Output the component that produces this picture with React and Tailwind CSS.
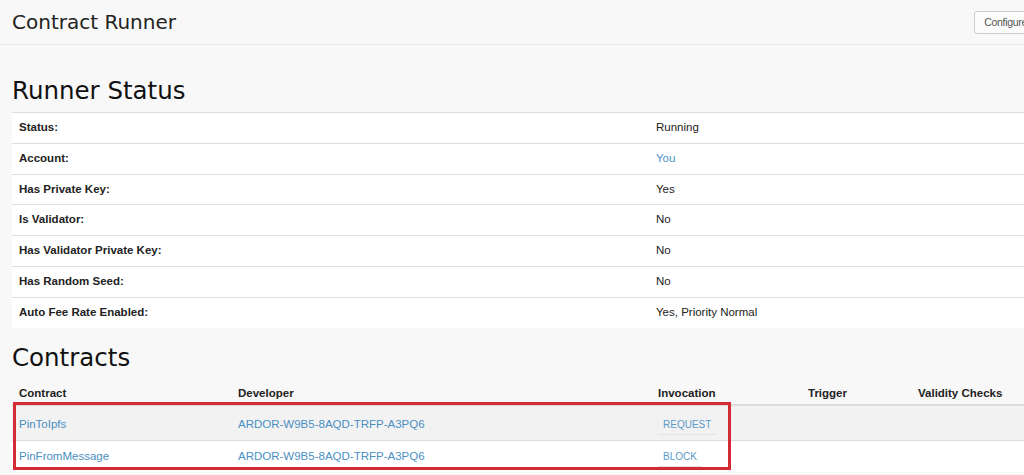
import React from 'react';

const status = [
  { label: 'Status:', value: 'Running' },
  { label: 'Account:', value: 'You', link: true },
  { label: 'Has Private Key:', value: 'Yes' },
  { label: 'Is Validator:', value: 'No' },
  { label: 'Has Validator Private Key:', value: 'No' },
  { label: 'Has Random Seed:', value: 'No' },
  { label: 'Auto Fee Rate Enabled:', value: 'Yes, Priority Normal' },
];

const contracts = [
  { name: 'PinToIpfs', developer: 'ARDOR-W9B5-8AQD-TRFP-A3PQ6', invocation: 'REQUEST', striped: true },
  { name: 'PinFromMessage', developer: 'ARDOR-W9B5-8AQD-TRFP-A3PQ6', invocation: 'BLOCK', striped: false },
];

const heading = { fontFamily: '"DejaVu Sans", Verdana, sans-serif' };

export default function App() {
  return (
    <div
      className="relative w-full h-[475px] overflow-hidden bg-[#f8f8f8] text-[#333] text-[11.5px]"
      style={{ fontFamily: '"Liberation Sans", Arial, Helvetica, sans-serif' }}
    >
      {/* Top bar */}
      <div className="h-[45px] border-b border-[#e7e7e7] bg-[#f8f8f8]">
        <div className="w-[1037px] h-full flex items-center justify-between pl-3">
          <h1 className="text-[20px] leading-[24px] text-[#222]" style={heading}>
            Contract Runner
          </h1>
          <button className="shrink-0 h-[23px] px-[9px] border border-[#ccc] rounded-[3px] bg-[#fcfcfc] text-[#555] text-[10.5px] tracking-[-0.3px] leading-[21px]">
            Configure
          </button>
        </div>
      </div>

      <div className="px-3">
        {/* Runner status */}
        <h2 className="mt-[32px] mb-[8px] text-[24.5px] leading-[27px] text-[#111]" style={heading}>
          Runner Status
        </h2>
        <table className="w-[1250px] bg-white border-collapse">
          <tbody>
            {status.map((row) => (
              <tr key={row.label} className="border-t border-[#ddd]">
                <td className="w-[637px] px-[7px] py-[5px] leading-[19.83px] font-bold text-[#222]">{row.label}</td>
                <td className={`px-[7px] py-[5px] leading-[19.83px] ${row.link ? 'text-[#4a8fc4]' : 'text-[#222]'}`}>
                  {row.value}
                </td>
              </tr>
            ))}
          </tbody>
        </table>

        {/* Contracts */}
        <h2 className="mt-[16px] mb-[6px] text-[24.5px] leading-[27px] text-[#111]" style={heading}>
          Contracts
        </h2>
        <table className="w-[1250px] border-collapse text-left">
          <thead>
            <tr className="border-b-2 border-[#ddd]">
              <th className="w-[219px] px-[7px] pt-[6px] pb-[1px] leading-[20px] font-bold text-[#222]">Contract</th>
              <th className="w-[420px] px-[7px] pt-[6px] pb-[1px] leading-[20px] font-bold text-[#222]">Developer</th>
              <th className="w-[150px] px-[7px] pt-[6px] pb-[1px] leading-[20px] font-bold text-[#222]">Invocation</th>
              <th className="w-[110px] px-[7px] pt-[6px] pb-[1px] leading-[20px] font-bold text-[#222]">Trigger</th>
              <th className="px-[7px] pt-[6px] pb-[1px] leading-[20px] font-bold text-[#222]">Validity Checks</th>
            </tr>
          </thead>
          <tbody>
            {contracts.map((c) => (
              <tr
                key={c.name}
                className={`${c.striped ? 'bg-[#f2f2f2] h-[36px]' : 'bg-white h-[31px] border-t border-[#ddd]'}`}
              >
                <td className={`px-[7px] text-[#4a8fc4] ${c.striped ? 'pt-[4px]' : 'pb-[0px]'}`}>{c.name}</td>
                <td className={`px-[7px] text-[#4a8fc4] ${c.striped ? 'pt-[4px]' : 'pb-[0px]'}`}>{c.developer}</td>
                <td className={`px-[7px] ${c.striped ? 'pt-[4px]' : 'pt-[1px]'}`}>
                  <span className="inline-block px-[5px] pt-[2px] pb-[3px] border-b border-[#e3e3e3] text-[10px] leading-[13px] text-[#5a9ac9]">
                    {c.invocation}
                  </span>
                </td>
                <td className="px-[7px]"></td>
                <td className="px-[7px]"></td>
              </tr>
            ))}
          </tbody>
        </table>
      </div>

      {/* Annotation frame */}
      <div className="absolute left-[13px] top-[402px] w-[718px] h-[68px] border-[3px] border-[#d42a34] pointer-events-none"></div>
    </div>
  );
}
